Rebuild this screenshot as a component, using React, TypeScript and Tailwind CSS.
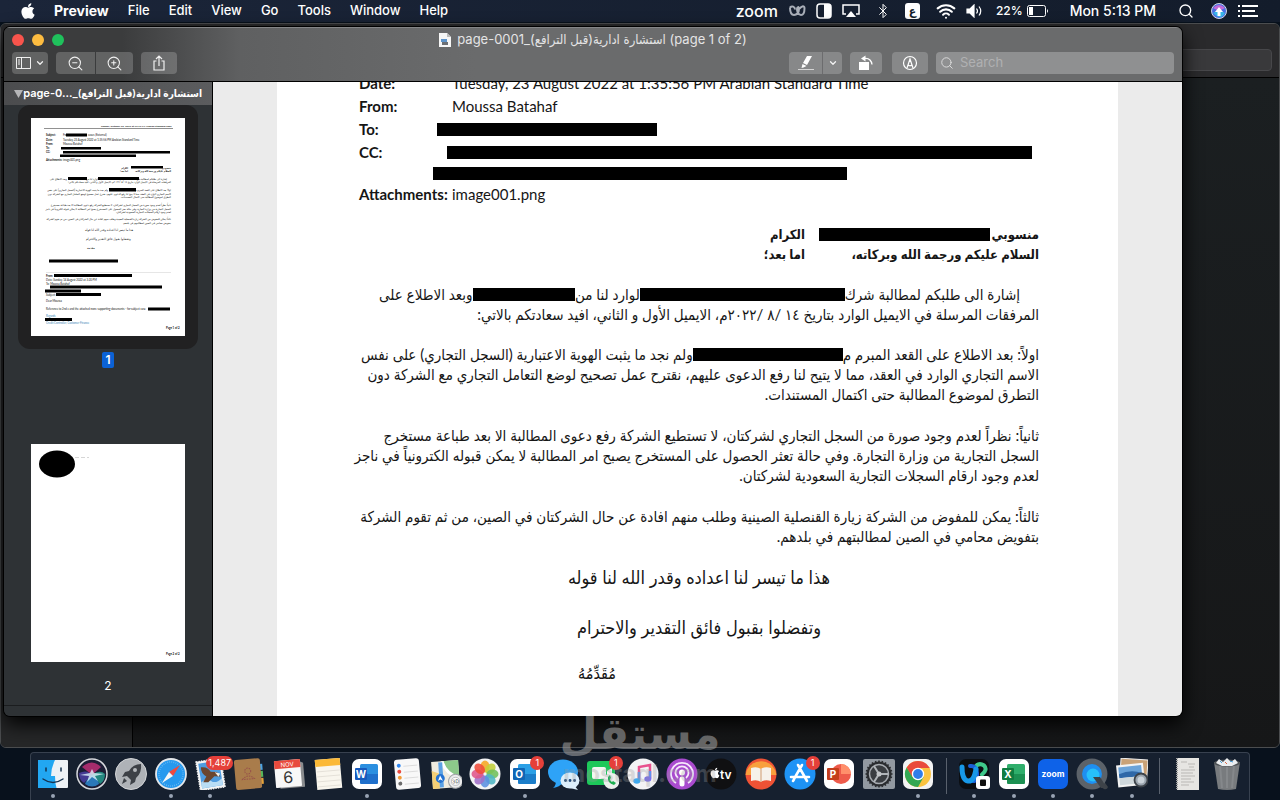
import React from 'react';
import clsx from 'clsx';
import { FaApple } from 'react-icons/fa';
import { Bluetooth, ChevronDown, Search, Wifi, ZoomIn, ZoomOut } from 'lucide-react';

const MENUS = ['File', 'Edit', 'View', 'Go', 'Tools', 'Window', 'Help'];

// Black marker over a part of a line, fills what the text leaves free
const Redaction: React.FC<{ className?: string }> = ({ className }) => (
  <span className={clsx('block h-[13px] bg-black', className)} />
);

const MenuBar: React.FC = () => (
  <header className="flex h-[22px] shrink-0 items-center justify-between bg-linear-to-r from-[#1b2539] to-[#131c2b] pr-[22px] pl-[19px] text-white">
    <nav className="flex items-center gap-[19px] text-[13px] font-medium">
      <button aria-label="Apple" className="w-4"><FaApple size={18} /></button>
      <button className="text-sm font-bold">Preview</button>
      {MENUS.map((m) => <button key={m}>{m}</button>)}
    </nav>
    <div className="flex items-center">
      <span className="mr-2.5 text-base leading-5 font-medium">zoom</span>
      <svg viewBox="0 0 18 12" className="mr-2.5 h-3 w-[18px]" fill="none" stroke="#a9afb9" strokeWidth="2">
        <path d="M2 2.500c0 4 1 7.500 4 7.500s5-3 5-6-2-2-2 0 1 6 4 6 3.500-4 3.500-7-4-1.500-5 1M2 2.500c2-2 5-1 5 2" />
      </svg>
      <svg viewBox="0 0 16 16" className="mr-[10px] size-4">
        <rect x="1" y="1" width="14" height="14" rx="3" fill="none" stroke="#fff" strokeWidth="1.500" />
        <path d="M8 1h4a3 3 0 0 1 3 3v8a3 3 0 0 1-3 3H8z" fill="#fff" />
      </svg>
      <svg viewBox="0 0 18 14" className="mr-[15px] h-3.5 w-[18px]">
        <path d="M4 10H1V1h16v9h-3" fill="none" stroke="#fff" strokeWidth="1.500" />
        <path d="M9 7l5 6H4z" fill="#fff" />
      </svg>
      <Bluetooth size={16} strokeWidth={1.5} className="mr-[14px]" />
      <span className="mr-4 flex h-4 w-[15px] items-center justify-center rounded-[3px] bg-white text-xs leading-4 font-bold text-[#131c2b]">ع</span>
      <Wifi size={20} strokeWidth={2.5} className="mr-2.5" />
      <svg viewBox="0 0 18 14" className="mr-3 h-3.5 w-[18px]" fill="none" stroke="#fff" strokeWidth="1.200">
        <path d="M1 5h3l4-4v12L4 9H1z" fill="#fff" />
        <path d="M10.500 4.500q2 2.500 0 5M13 2.500q3.500 4.500 0 9" />
      </svg>
      <span className="mr-1 text-xs font-medium">22%</span>
      <svg viewBox="0 0 22 12" className="mr-[21px] h-3 w-[22px]">
        <rect x=".5" y=".5" width="18" height="11" rx="2" fill="none" stroke="#fff" />
        <rect x="2" y="2" width="4" height="8" fill="#fff" />
        <path d="M20 4q2 2 0 4z" fill="#fff" />
      </svg>
      <span className="mr-[22px] text-sm font-medium">Mon 5:13 PM</span>
      <Search size={16} className="mr-[17px]" />
      <svg viewBox="0 0 16 16" className="mr-[11px] size-4">
        <circle cx="8" cy="8" r="7.500" fill="#4a6ee0" stroke="#cfd6e6" />
        <path d="M2 5q6-6 12 0L8 8z" fill="#c46ad8" />
        <path d="M2 10l6-3 6 3q-3 5-6 4t-6-4" fill="#38b6e8" />
        <path d="M8 4l4 5H9.500v4h-3V9H4z" fill="#fff" />
      </svg>
      <svg viewBox="0 0 20 12" className="h-3 w-5" fill="#fff">
        <path d="M0 0h2v2H0zM4 0h16v2H4zM0 5h2v2H0zM4 5h13v2H4zM0 10h2v2H0zM4 10h16v2H4z" />
      </svg>
    </div>
  </header>
);

const BackWindow: React.FC = () => (
  <div className="absolute inset-x-0 top-px bottom-1 flex flex-col overflow-hidden rounded-md border border-[#4b4d4f] bg-[#1b1e20]">
    <div className="flex h-[54px] shrink-0 items-end justify-end border-b border-black bg-[#2a2a2c] pr-[7px] pb-1.5">
      <div className="h-[22px] w-60 rounded border border-[#47474a] bg-[#39393b]" />
    </div>
    <div className="flex flex-1">
      <div className="w-[132px] border-r border-black bg-[#262728]" />
      <div className="flex-1 bg-linear-to-b from-[#1b1f21] to-[#161718]" />
    </div>
  </div>
);

const ToolButton: React.FC<{ label: string; className?: string; children: React.ReactNode }> = ({ label, className, children }) => (
  <button aria-label={label} className={clsx('flex h-[22px] items-center justify-center bg-white/20 text-white/90', className)}>
    {children}
  </button>
);

const TitleBar: React.FC = () => (
  <div className="flex h-[55px] shrink-0 flex-col border-t border-b border-t-[#858688] border-b-black bg-linear-to-r from-[#3b3c3d] from-10% via-[#5f6061] via-20% to-[#6a6b6c] to-40%">
    <div className="flex h-6 items-center px-2">
      <div className="flex gap-2">
        <button aria-label="Close" className="size-3 rounded-full bg-[#f8544c]" />
        <button aria-label="Minimize" className="size-3 rounded-full bg-[#fdbc40]" />
        <button aria-label="Full screen" className="size-3 rounded-full bg-[#1fc15c]" />
      </div>
      <h1 className="flex flex-1 items-center justify-center gap-1.5 pr-[52px] text-[13px] whitespace-nowrap text-[#e4e4e5]">
        <svg viewBox="0 0 12 14" className="h-3.5 w-3">
          <path d="M0 0h8l4 4v10H0z" fill="#f6f6f6" />
          <path d="M8 0l4 4H8z" fill="#bcbcbc" />
          <path d="M2 6h6v3H2z" fill="#5d93c9" />
          <path d="M3 9h6v3H3z" fill="#6b6f74" />
        </svg>
        <span>page-0001_<bdi dir="rtl">استشارة ادارية(قبل الترافع)</bdi> (page 1 of 2)</span>
      </h1>
    </div>
    <div className="flex items-center px-2">
      <ToolButton label="Sidebar" className="w-9 gap-1 rounded">
        <svg viewBox="0 0 15 12" className="h-3 w-[15px]" fill="none" stroke="currentColor">
          <path d="M.5.5h14v11H.5zM5.500.5v11M2 3h2M2 5h2M2 7h2" />
        </svg>
        <ChevronDown size={10} strokeWidth={3} />
      </ToolButton>
      <ToolButton label="Zoom out" className="ml-2 w-[39px] rounded-l"><ZoomOut size={17} strokeWidth={1.5} /></ToolButton>
      <ToolButton label="Zoom in" className="ml-px w-[37px] rounded-r"><ZoomIn size={17} strokeWidth={1.5} /></ToolButton>
      <ToolButton label="Share" className="ml-2 w-9 rounded">
        <svg viewBox="0 0 14 16" className="h-4 w-3.5" fill="none" stroke="currentColor" strokeWidth="1.200">
          <path d="M4.500 6H2v9h10V6H9.500M7 11V1M4 4l3-3 3 3" />
        </svg>
      </ToolButton>
      <ToolButton label="Highlight" className="ml-auto w-[33px] rounded-l">
        <svg viewBox="0 0 18 16" className="h-4 w-[18px]" fill="#fff">
          <path d="M10 1h5l-5 9-4-2zM5.500 9l4 2-3 1.500-2 .5z" />
          <path d="M1 14h16v1H1z" fill="#d5d5d5" />
        </svg>
      </ToolButton>
      <ToolButton label="Highlight colour" className="w-5 rounded-r border-l border-[#6c6c6e]"><ChevronDown size={10} strokeWidth={3} /></ToolButton>
      <ToolButton label="Rotate" className="ml-2 w-8 rounded">
        <svg viewBox="0 0 16 16" className="size-4" fill="#fff">
          <path d="M1 7h10v8H1z" />
          <path d="M6 3.500q7-1 8 6" fill="none" stroke="#fff" strokeWidth="1.300" />
          <path d="M3 3.500L7.500.5v6z" />
        </svg>
      </ToolButton>
      <ToolButton label="Markup" className="ml-2.5 w-9 rounded">
        <svg viewBox="0 0 16 16" className="size-4" fill="none" stroke="#fff" strokeWidth="1.200">
          <circle cx="8" cy="8" r="6.500" />
          <path d="M5 13l3-9 3 9M6 10q2 1.500 4 0M8 4v3" />
        </svg>
      </ToolButton>
      <label className="ml-2 flex h-[22px] w-[238px] items-center gap-1.5 rounded bg-white/25 px-1 text-[#e2e2e2]">
        <Search size={14} strokeWidth={1.5} />
        <input aria-label="Search" placeholder="Search" className="min-w-0 flex-1 bg-transparent text-[13px] outline-none placeholder:text-[#b0b0b2]" />
      </label>
    </div>
  </div>
);

const P1 = ['اولاً: بعد الاطلاع على القعد المبرم م', 'ولم نجد ما يثبت الهوية الاعتبارية (السجل التجاري) على نفس'];
const P1_REST = [
  'الاسم التجاري الوارد في العقد، مما لا يتيح لنا رفع الدعوى عليهم، نقترح عمل تصحيح لوضع التعامل التجاري مع الشركة دون',
  'التطرق لموضوع المطالبة حتى اكتمال المستندات.',
];
const P2 = [
  'ثانياً: نظراً لعدم وجود صورة من السجل التجاري لشركتان، لا تستطيع الشركة رفع دعوى المطالبة الا بعد طباعة مستخرج',
  'السجل التجارية من وزارة التجارة. وفي حالة تعثر الحصول على المستخرج يصبح امر المطالبة لا يمكن قبوله الكترونياً في ناجز',
  'لعدم وجود ارقام السجلات التجارية السعودية لشركتان.',
];
const P3 = [
  'ثالثاً: يمكن للمفوض من الشركة زيارة القنصلية الصينية وطلب منهم افادة عن حال الشركتان في الصين، من ثم تقوم الشركة',
  'بتفويض محامي في الصين لمطالبتهم في بلدهم.',
];

const ThumbOne: React.FC = () => {
  const rtl = (line: string, y: number) => (
    <text key={y} x="140" y={y} direction="rtl">{line}</text>
  );
  return (
    <svg viewBox="0 0 154 218" className="block w-full bg-white [font-family:Lato,'DejaVu_Sans_Condensed',sans-serif]" fontSize="2.750" fill="#111">
      <text x="70" y="9" fontWeight="bold" fontSize="2.600">Sunday, October 23, 2022 at 12:11:14 Arabian Standard Time</text>
      <path d="M13 10.500h129" stroke="#222" strokeWidth=".5" />
      <text x="15" y="18" fontWeight="bold">Subject:</text>
      <text x="32" y="18">Fw:</text>
      <text x="57" y="18">cases (External)</text>
      <text x="15" y="22.500" fontWeight="bold">Date:</text>
      <text x="32" y="22.500">Tuesday, 23 August 2022 at 1:35:56 PM Arabian Standard Time</text>
      <text x="15" y="26.500" fontWeight="bold">From:</text>
      <text x="32" y="26.500">Moussa Batahaf</text>
      <text x="15" y="31" fontWeight="bold">To:</text>
      <text x="15" y="35" fontWeight="bold">CC:</text>
      <text x="15" y="43" fontWeight="bold">Attachments:</text>
      <text x="32" y="43">image001.png</text>
      <g fontWeight="bold" fontSize="2.500">
        {rtl('منسوبي', 50.5)}
        {rtl('السلام عليكم ورجمة الله وبركاته،', 54)}
        <text x="97" y="50.500" direction="rtl">الكرام</text>
        <text x="97" y="54" direction="rtl">اما بعد؛</text>
      </g>
      <text x="136" y="61.500" direction="rtl">إشارة الى طلبكم لمطالبة شرك</text>
      <text x="67" y="61.500" direction="rtl">لوارد لنا من</text>
      <text x="36" y="61.500" direction="rtl">وبعد الاطلاع على</text>
      {rtl('المرفقات المرسلة في الايميل الوارد بتاريخ ١٤ /٨ /٢٠٢٢م، الايميل الأول و الثاني، افيد سعادتكم بالاتي:', 65)}
      {rtl(P1[0], 73)}
      <text x="77" y="73" direction="rtl">{P1[1]}</text>
      {P1_REST.map((l, i) => rtl(l, 76.5 + i * 3.5))}
      {P2.map((l, i) => rtl(l, 88 + i * 3.5))}
      {P3.map((l, i) => rtl(l, 102 + i * 3.5))}
      <g fontSize="3.300">
        <text x="54" y="113">هذا ما تيسر لنا اعداده وقدر الله لنا قوله</text>
        <text x="55" y="122">وتفضلوا بقبول فائق التقدير والاحترام</text>
        <text x="56" y="131">مقدمه</text>
      </g>
      <path d="M35 15.500h21v3H35zM30 29h40v2.500H30zM32 33h107v2.500H32zM29 36.500h76v2.500H29zM100 48h32v2.500h-32zM37 59h19v3H37zM67 59h41v3H67zM78 70h27v3.500H78zM18 141.500h69v3H18zM23 156h78v3H23zM19 167.500h112v3H19zM14 171.500h36v3H14zM25 175h45v3H25zM117 189.500h22v3h-22zM14 200h27v3H14z" fill="#000" />
      <path d="M15 154.500h125" stroke="#ccc" strokeWidth=".5" />
      <text x="15" y="158.500" fontWeight="bold">From:</text>
      <text x="15" y="162.500">Date: Sunday, 14 August 2022 at 3:20 PM</text>
      <text x="15" y="166.500">To: Moussa Batahaf</text>
      <text x="15" y="177.500">Subject:</text>
      <text x="15" y="184">Dear Moussa</text>
      <text x="15" y="192">Reference to 2nd e and the attached more supporting documents - for subject case</text>
      <text x="15" y="199" fill="#3a85b5">Regards</text>
      <text x="15" y="206" fill="#3a85b5">Credit Controller, Customer Finance</text>
      <text x="135" y="211" fontWeight="bold">Page 1 of 2</text>
    </svg>
  );
};

const ThumbTwo: React.FC = () => (
  <svg viewBox="0 0 154 218" className="block w-full bg-white [font-family:Lato,sans-serif]">
    <ellipse cx="26" cy="20" rx="18" ry="13.500" />
    <path d="M44 13.500h14" stroke="#bbb" strokeWidth=".6" strokeDasharray="4 2" />
    <text x="135" y="211" fontWeight="bold" fontSize="2.750" fill="#111">Page 2 of 2</text>
  </svg>
);

const Sidebar: React.FC = () => (
  <aside className="flex w-[208px] shrink-0 flex-col bg-[#2e3235] text-white">
    <div className="flex h-[23px] shrink-0 items-center justify-between bg-linear-to-r from-[#4b4c4e] to-[#5b5c5e] px-2.5 text-[11px] font-semibold">
      <svg viewBox="0 0 9 8" className="h-2 w-[9px] shrink-0"><path d="M0 0h9L4.500 8z" fill="#b5b5b7" /></svg>
      <span className="whitespace-nowrap">page-0..._<bdi dir="rtl" className="text-[10px]">استشارة ادارية(قبل الترافع)</bdi></span>
    </div>
    <div className="flex min-h-0 flex-1 flex-col items-center overflow-hidden text-xs">
      <button aria-label="Page 1" className="w-[180px] shrink-0 rounded-xl bg-[#212122] p-[13px]"><ThumbOne /></button>
      <span className="mt-[3px] rounded-xs bg-[#0b62d6] px-[3px] leading-4 font-semibold">1</span>
      <button aria-label="Page 2" className="mt-[76px] w-[154px] shrink-0"><ThumbTwo /></button>
      <span className="mt-4 leading-4">2</span>
    </div>
    <div className="h-[11px] shrink-0 border-t border-[#1b1d1f]" />
  </aside>
);

const Lines: React.FC<{ lines: string[]; className?: string }> = ({ lines, className }) => (
  <p className={className}>
    {lines.map((l) => <span key={l} className="block">{l}</span>)}
  </p>
);

const Letter: React.FC = () => (
  <article className="mx-16 min-w-0 flex-1 overflow-hidden bg-white pr-[79px] pl-[82px] text-base whitespace-nowrap text-[#161616] [font-family:Lato,'DejaVu_Sans_Condensed','DejaVu_Sans',sans-serif]">
    <dl className="-mt-[10px] text-[15px] leading-[23px]">
      <div className="flex"><dt className="w-[93px] font-bold">Date:</dt><dd>Tuesday, 23 August 2022 at 1:35:56 PM Arabian Standard Time</dd></div>
      <div className="flex"><dt className="w-[93px] font-bold">From:</dt><dd>Moussa Batahaf</dd></div>
      <div className="flex items-center"><dt className="w-[78px] font-bold">To:</dt><dd><Redaction className="w-[220px]" /></dd></div>
      <div className="flex items-center"><dt className="w-[88px] font-bold">CC:</dt><dd><Redaction className="w-[585px]" /></dd></div>
      <div className="flex h-[19px] items-center pl-[74px]"><dd><Redaction className="w-[414px]" /></dd></div>
      <div className="flex"><dt className="w-[93px] font-bold">Attachments:</dt><dd>image001.png</dd></div>
    </dl>
    <div dir="rtl" lang="ar" className="text-[15px] leading-5">
      <div className="mt-[18px] grid grid-cols-[234px_1fr] text-[13px] leading-5 font-bold">
        <span className="flex items-center gap-0.5 pl-[14px]">منسوبي<Redaction className="flex-1" /></span>
        <span>الكرام</span>
        <span>السلام عليكم ورجمة الله وبركاته،</span>
        <span>اما بعد؛</span>
      </div>
      <div className="mt-5">
        <p className="flex w-[660px] items-center pr-[19px]">
          إشارة الى طلبكم لمطالبة شرك
          <Redaction className="flex-[2]" />
          لوارد لنا من
          <Redaction className="flex-1" />
          وبعد الاطلاع على
        </p>
        <p>المرفقات المرسلة في الايميل الوارد بتاريخ ١٤ /٨ /٢٠٢٢م، الايميل الأول و الثاني، افيد سعادتكم بالاتي:</p>
      </div>
      <div className="mt-5">
        <p className="flex w-[678px] items-center">{P1[0]}<Redaction className="flex-1" />{P1[1]}</p>
        <Lines lines={P1_REST} />
      </div>
      <Lines lines={P2} className="mt-[21px]" />
      <Lines lines={P3} className="mt-[21px]" />
      <div className="text-center text-lg leading-5">
        <p className="mt-[21px]">هذا ما تيسر لنا اعداده وقدر الله لنا قوله</p>
        <p className="mt-[30px]">وتفضلوا بقبول فائق التقدير والاحترام</p>
        <p className="mx-auto mt-[26px] w-[242px] text-left text-base leading-5">مُقَدِّمُهُ</p>
      </div>
    </div>
  </article>
);

const PreviewWindow: React.FC = () => (
  <main className="absolute top-[5px] right-[98px] bottom-9 left-1 flex flex-col overflow-hidden rounded-md shadow-[0_0_0_1px_#000,0_8px_20px_#000]">
    <TitleBar />
    <div className="flex min-h-0 flex-1">
      <Sidebar />
      <div className="flex min-w-0 flex-1 border-l border-black bg-[#ebebeb]"><Letter /></div>
    </div>
  </main>
);

type DockItem = { label: string; icon: React.ReactNode; running?: boolean; badge?: string };

const OfficeIcon: React.FC<{ letter: string; dark: string; light: string; round?: boolean }> = ({ letter, dark, light, round }) => (
  <>
    <rect x="1" y="1" width="30" height="30" rx="7" fill="#fff" />
    {round ? <circle cx="18" cy="16" r="10" fill={light} /> : <rect x="9" y="6" width="18" height="20" rx="1.500" fill={light} />}
    {round ? <path d="M18 6a10 10 0 0 1 10 10H18z" fill="#ff8f6b" /> : <path d="M9 16h18v8.500a1.500 1.500 0 0 1-1.500 1.500H10.500A1.500 1.500 0 0 1 9 24.500z" fill={dark} opacity=".6" />}
    <rect x="4" y="10" width="12" height="12" rx="1" fill={dark} />
    <text x="10" y="19.500" fontSize="10" fontWeight="bold" fill="#fff" textAnchor="middle">{letter}</text>
  </>
);

const PETALS = ['#f6a623', '#c3cf3a', '#6fbf5b', '#4fb6c4', '#5b8fe0', '#a070c8', '#e0558a', '#ef4b3a'];
const TEETH = Array.from({ length: 24 }, (_, i) => i * 15);

const MAIN_APPS: DockItem[] = [
  { label: 'Finder', running: true, icon: <>
    <rect x="1" y="2" width="30" height="28" rx="1" fill="#eef2f6" />
    <path d="M1 2h17q-4 8-4 16h4q0 7 1.500 12H1z" fill="#22a7f2" />
    <path d="M6 21q10 7 20 0" fill="none" stroke="#15324f" strokeWidth="1.400" strokeLinecap="round" />
    <path d="M9 10v3M24 10v3" stroke="#15324f" strokeWidth="1.500" strokeLinecap="round" />
  </> },
  { label: 'Siri', icon: <>
    <circle cx="16" cy="16" r="15" fill="#1c1d35" stroke="#d6d8dc" strokeWidth="1.500" />
    <path d="M6 9q10-9 19 0L16 17z" fill="#a52c6c" />
    <path d="M3 15q8-4 13 2l-8 8q-5-3-5-10" fill="#443a92" />
    <path d="M16 17q8-6 13-1 0 7-5 10z" fill="#23877f" />
    <path d="M16 17q-6 5-7 9 7 5 14 0-1-5-7-9" fill="#2b78b8" />
    <path d="M4 17l10-2 2-4 2 4 10 1-9 2 3 5-6-4-5 5 2-6z" fill="#dff3fb" opacity=".8" />
  </> },
  { label: 'Launchpad', icon: <>
    <circle cx="16" cy="16" r="15.500" fill="#aeb2b7" stroke="#d2d4d7" />
    <path d="M26 6q-8 0-12 7l-4 1-3 5 5-1 4 4-1 5 5-3 1-4q6-5 5-14z" fill="#3d4147" />
    <circle cx="20" cy="12" r="2" fill="#b4b7bb" />
    <path d="M9 20l3 3-5 3z" fill="#3d4147" />
  </> },
  { label: 'Safari', running: true, icon: <>
    <circle cx="16" cy="16" r="15" fill="#2699ee" stroke="#e4e7ea" strokeWidth="1.800" />
    <circle cx="16" cy="16" r="12" fill="none" stroke="#7fc3f5" strokeWidth="1.500" strokeDasharray=".6 1.500" />
    <path d="M25 7l-7 11-4-4z" fill="#f0493e" />
    <path d="M7 25l7-11 4 4z" fill="#f5f7f8" />
  </> },
  { label: 'Mail', running: true, badge: '1,487', icon: <g transform="rotate(-9 16 16)">
    <rect x="4" y="2" width="25" height="29" fill="#f4f4f4" stroke="#f4f4f4" strokeWidth="1.500" strokeDasharray="1.500 1" />
    <rect x="6" y="4" width="21" height="25" fill="#4f9ce0" />
    <path d="M6 23q6-4 10 0t11-1v7H6z" fill="#b9ddf5" />
    <path d="M8 8q7 0 9 6l6 1 3 5-6-1-7 5-5-1 4-5q-5-4-4-10z" fill="#6b4630" />
    <path d="M21 15l5 2-2 3z" fill="#f2efe9" />
  </g> },
  { label: 'Contacts', icon: <g transform="rotate(-5 16 16)">
    <path d="M27 7h3v6h-3z" fill="#4aa3e4" /><path d="M27 14h3v6h-3z" fill="#57b95a" /><path d="M27 21h3v6h-3z" fill="#e6a33a" />
    <rect x="2" y="1" width="26" height="30" rx="2" fill="#a97c4b" />
    <circle cx="15" cy="13" r="3" fill="none" stroke="#96504a" strokeDasharray="1.500 1" /><path d="M9 21q6-6 12 0z" fill="none" stroke="#96504a" strokeDasharray="1.500 1" />
  </g> },
  { label: 'Calendar', icon: <g transform="rotate(-5 16 16)">
    <path d="M27 4l4 2v24H6z" fill="#8a8c8f" />
    <rect x="2" y="2" width="26" height="27" rx="1" fill="#f8f8f8" /><path d="M2 2h26v8H2z" fill="#e84a3d" />
    <text x="15" y="8.500" fontSize="6" fill="#fff" textAnchor="middle">NOV</text>
    <text x="15" y="25" fontSize="16" fill="#333" textAnchor="middle">6</text>
  </g> },
  { label: 'Notes', icon: <g transform="rotate(-5 16 16)">
    <rect x="4" y="1" width="25" height="30" fill="#f9f6ee" /><path d="M4 1h25v7H4z" fill="#fbb937" />
    <path d="M5 13h23M5 18h23M5 23h23M5 28h23" stroke="#dcd9d0" strokeWidth=".7" />
  </g> },
  { label: 'Word', running: true, icon: <OfficeIcon letter="W" dark="#185abd" light="#2b8fe0" /> },
  { label: 'Reminders', icon: <g transform="rotate(-5 16 16)">
    <rect x="4" y="1" width="25" height="30" rx="3" fill="#f8f8f8" />
    <circle cx="8.500" cy="7" r="2" fill="#2e86f0" /><circle cx="8.500" cy="13" r="2" fill="#e9493d" /><circle cx="8.500" cy="19" r="2" fill="#f39b35" /><circle cx="8.500" cy="25" r="2" fill="#6b6b6b" />
    <path d="M13 8h14M13 14h14M13 20h14M13 26h14" stroke="#d2d2d2" strokeWidth=".7" />
  </g> },
  { label: 'Maps', icon: <g transform="rotate(-4 16 16)">
    <rect x="2" y="3" width="27" height="27" fill="#efebdf" />
    <path d="M13 3h16v18l-8-4z" fill="#8cc98a" /><path d="M13 3q2 12 16 18" fill="none" stroke="#fff" strokeWidth="3" />
    <path d="M2 12l7 3v15H2z" fill="#f4cf76" /><path d="M11 4v25" stroke="#5ba1e4" strokeWidth="4" />
    <circle cx="10" cy="20" r="4.500" fill="#2573d2" /><path d="M10 17l2.500 5.500L10 21l-2.500 1.500z" fill="#fff" />
    <circle cx="25" cy="24" r="7" fill="#ecedee" stroke="#9da0a4" /><circle cx="25" cy="24" r="4" fill="#fff" stroke="#9da0a4" strokeWidth=".6" /><text x="25" y="26" fontSize="5" fill="#444" textAnchor="middle">3D</text>
  </g> },
  { label: 'Photos', icon: <>
    <circle cx="16" cy="16" r="15.500" fill="#f4f4f4" />
    {PETALS.map((c, i) => <ellipse key={c} cx="16" cy="8.500" rx="4.500" ry="6" fill={c} opacity=".88" transform={`rotate(${i * 45} 16 16)`} />)}
  </> },
  { label: 'Outlook', running: true, badge: '1', icon: <OfficeIcon letter="O" dark="#1066b5" light="#2ba0e6" /> },
  { label: 'Messages', icon: <>
    <ellipse cx="15" cy="14" rx="15" ry="12.500" fill="#2ea3f7" /><path d="M8 22q0 6-3 8 7-1 9-5z" fill="#2ea3f7" />
    <ellipse cx="22" cy="22.500" rx="9.500" ry="8" fill="#dceffc" /><path d="M26 27l4 5-8-2z" fill="#dceffc" />
    <path d="M17.500 22.500h.1M22 22.500h.1M26.500 22.500h.1" stroke="#234a79" strokeWidth="2.800" strokeLinecap="round" />
  </> },
  { label: 'FaceTime', badge: '1', icon: <>
    <rect x="0" y="3" width="28" height="24" rx="3" fill="#1dc85a" />
    <rect x="5" y="9" width="14" height="12" rx="2" fill="#f2f6f2" /><path d="M20 13l5-3v10l-5-3z" fill="#f2f6f2" />
    <circle cx="24.500" cy="23" r="8" fill="#ecefec" /><path d="M21 19q-1 6 6 8l2-2-3-2-1 1q-2-1-2-3l1-1-1-3z" fill="#1cae4f" />
  </> },
  { label: 'Music', icon: <>
    <circle cx="16" cy="16" r="15.500" fill="#f3f3f5" />
    <path d="M12 22V9l11-2v13" fill="none" stroke="#e8518e" strokeWidth="2.500" />
    <path d="M12 14v9M23 13v8" stroke="#5a8ff0" strokeWidth="2.500" /><ellipse cx="9.800" cy="23" rx="3.500" ry="2.700" fill="#3fa9ee" /><ellipse cx="20.800" cy="21" rx="3.500" ry="2.700" fill="#7a6df0" />
  </> },
  { label: 'Podcasts', icon: <>
    <circle cx="16" cy="16" r="15.500" fill="#a94bcf" />
    <g fill="none" stroke="#f7e9fc" strokeWidth="1.800"><path d="M10 25a11 11 0 1 1 12 0M12 20a6.500 6.500 0 1 1 8 0" /></g>
    <circle cx="16" cy="14.500" r="3" fill="#fff" /><rect x="13.500" y="18.500" width="5" height="10" rx="2.500" fill="#fff" />
  </> },
  { label: 'TV', icon: <>
    <circle cx="16" cy="16" r="15.500" fill="#101012" />
    <FaApple x="4" y="9" size={12} color="#fff" />
    <text x="15" y="20.500" fontSize="12" fontWeight="600" fill="#fff">tv</text>
  </> },
  { label: 'Books', icon: <>
    <circle cx="16" cy="16" r="15.500" fill="#ee5235" /><path d="M.6 17a15.500 15.500 0 0 1 30.800 0z" fill="#f8a03c" />
    <path d="M16 11q-4-3-10-1v13q6-2 10 1 4-3 10-1V10q-6-2-10 1z" fill="#f6f1ea" /><path d="M16 11v13" stroke="#cf9b70" />
  </> },
  { label: 'App Store', badge: '1', icon: <>
    <circle cx="16" cy="16" r="15.500" fill="#1e93f5" />
    <path d="M18 7l-8 14M14 7l9 16M7 19h18M9 23l1-1.500" stroke="#fff" strokeWidth="2.600" strokeLinecap="round" />
  </> },
  { label: 'PowerPoint', icon: <OfficeIcon letter="P" dark="#c43e1c" light="#ee5b4b" round /> },
  { label: 'System Preferences', icon: <>
    <rect x="0" y="1" width="32" height="30" rx="2" fill="#9299a1" />
    <circle cx="16" cy="16" r="12.500" fill="#2b2d30" />
    {TEETH.map((a) => <rect key={a} x="15.200" y="2.500" width="1.600" height="3" fill="#2b2d30" transform={`rotate(${a} 16 16)`} />)}
    <circle cx="16" cy="16" r="9.500" fill="#3a3d41" stroke="#a7abb0" strokeWidth="1.500" />
    <path d="M16 16h9M16 16l-5-8M16 16l-5 8" stroke="#b0b4b8" strokeWidth="2" /><circle cx="16" cy="16" r="2.500" fill="#c0c3c6" />
  </> },
  { label: 'Chrome', running: true, icon: <>
    <rect x="1" y="1" width="30" height="30" rx="7" fill="#f3f3f3" />
    <circle cx="16" cy="16" r="13" fill="#fbc33f" />
    <path d="M4.700 9.500a13 13 0 0 1 22.600 0L28 10H16l-6 9z" fill="#e94a3c" />
    <path d="M4.700 9.500a13 13 0 0 0 11.300 19.500l5.500-9.800L16 16l-5.500 3.200z" fill="#33a853" />
    <circle cx="16" cy="16" r="6.200" fill="#fff" /><circle cx="16" cy="16" r="4.900" fill="#2f7de9" />
  </> },
];

const RECENT_APPS: DockItem[] = [
  { label: 'Webex', running: true, icon: <>
    <rect x="1" y="1" width="30" height="30" rx="7" fill="#0b0e12" />
    <path d="M17 9q4-5 9-1.500 4 4-2 9" fill="none" stroke="#3fc98a" strokeWidth="4" strokeLinecap="round" />
    <path d="M12 8q6-1 7 7t-4 8" fill="none" stroke="#1b5fd6" strokeWidth="4" strokeLinecap="round" />
    <path d="M4 9q0 13 6 14t8-12" fill="none" stroke="#1798e8" strokeWidth="5" strokeLinecap="round" />
    <rect x="18" y="18" width="14" height="13" rx="3" fill="#fff" /><rect x="22" y="21.500" width="6" height="6.500" rx="1" fill="#111" />
  </> },
  { label: 'Excel', running: true, icon: <OfficeIcon letter="X" dark="#107c41" light="#2fae6b" /> },
  { label: 'Zoom', running: true, icon: <>
    <rect x="1" y="1" width="30" height="30" rx="7" fill="#0e62e8" /><text x="16" y="19" fontSize="8.500" fontWeight="700" fill="#fff" textAnchor="middle">zoom</text>
  </> },
  { label: 'QuickTime Player', running: true, icon: <>
    <path d="M18 18h6l8 11q-1 3-4 2l-6-4z" fill="#3e4349" />
    <circle cx="16" cy="16" r="12.700" fill="#1f8ff0" stroke="#5c6269" strokeWidth="5.500" />
    <circle cx="17" cy="17" r="6.500" fill="#27c0fb" />
    <path d="M17 19l7 0 7 11h-6z" fill="#3e4349" />
  </> },
  { label: 'Preview', running: true, icon: <>
    <g transform="rotate(4 16 16)"><path d="M4 1h27v22H4z" fill="#c9a277" stroke="#eee" /></g>
    <g transform="rotate(-6 16 16)"><rect x="1" y="6" width="27" height="22" fill="#f3f3f3" /><path d="M3 8h23v9H3z" fill="#6ba3d8" /><path d="M3 15q12-4 23 1v3H3z" fill="#2f68a8" /><path d="M3 19h23v7H3z" fill="#cfd8dc" /></g>
    <circle cx="25" cy="22" r="6.500" fill="#9aa4ae" stroke="#3c4249" strokeWidth="1.800" /><circle cx="25" cy="22" r="3.500" fill="#cbd3da" />
  </> },
];

const FILES: DockItem[] = [
  { label: 'Document', icon: <>
    <path d="M5 0h22v32H5z" fill="#e6e5e2" /><path d="M5 0v32" stroke="#9c9c9c" strokeWidth="2" strokeDasharray="1 1" />
    <path d="M9 4h6M16 6h7M9 12h14M9 15h12M9 18h14M9 21h10M9 24h13M9 27h8M17 9h5" stroke="#b9b7b4" />
  </> },
  { label: 'Trash', icon: <>
    <path d="M3 4h26l-4 27q-9 2-18 0z" fill="#787b7e" /><path d="M9 7l2 23M16 7v23M23 7l-2 23" stroke="#85888b" strokeWidth="2" />
    <ellipse cx="16" cy="5" rx="13" ry="3.500" fill="#4d5155" /><path d="M5 5l3-4 4 3 4-4 4 4 4-3 3 4-6 3H11z" fill="#eceef0" />
    <path d="M9 3l2 2M19 3l3 1" stroke="#4a9fd8" /><path d="M14 4l2 2" stroke="#d86a4a" />
  </> },
];

const DockIcons: React.FC<{ items: DockItem[] }> = ({ items }) => (
  <>
    {items.map(({ label, icon, running, badge }) => (
      <button key={label} aria-label={label} className="relative flex min-w-0 flex-1 flex-col items-center pt-[5px]">
        <svg viewBox="0 0 32 32" className="size-8">{icon}</svg>
        {running && <span className="mt-1 size-1 rounded-full bg-[#98a2b3]" />}
        {badge && (
          <span className={clsx('absolute top-[3px] flex h-3.5 min-w-3.5 items-center justify-center rounded-full bg-[#e5403a] text-[9px] text-white', badge.length > 1 ? 'left-4 px-0.5' : 'right-0')}>
            {badge}
          </span>
        )}
      </button>
    ))}
  </>
);

const DockSeparator: React.FC = () => <span className="mx-2 mt-[5px] h-9 w-px bg-[#59616d]" />;

const Dock: React.FC = () => (
  <footer className="mx-[30px] flex h-12 shrink-0 rounded-t border border-b-0 border-[#38414f] bg-[#16202f] px-0.5">
    <DockIcons items={MAIN_APPS} />
    <DockSeparator />
    <DockIcons items={RECENT_APPS} />
    <DockSeparator />
    <DockIcons items={FILES} />
  </footer>
);

// Translucent brand mark lying over the window edge and the dock
const Watermark: React.FC = () => (
  <div className="pointer-events-none absolute inset-x-0 bottom-[14px] flex flex-col items-center text-[#9a9a9a]">
    <span lang="ar" className="text-[44px] leading-[56px] font-bold opacity-60 [font-family:'DejaVu_Sans',sans-serif]">مستقل</span>
    <span className="text-2xl leading-6 font-bold opacity-30">mostaql.com</span>
  </div>
);

export default function App() {
  return (
    <div className="relative flex h-screen flex-col overflow-hidden bg-[#08111c] [font-family:Inter,'DejaVu_Sans_Condensed','DejaVu_Sans',sans-serif]">
      <MenuBar />
      <div className="relative min-h-0 flex-1">
        <BackWindow />
        <PreviewWindow />
      </div>
      <Dock />
      <Watermark />
    </div>
  );
}
